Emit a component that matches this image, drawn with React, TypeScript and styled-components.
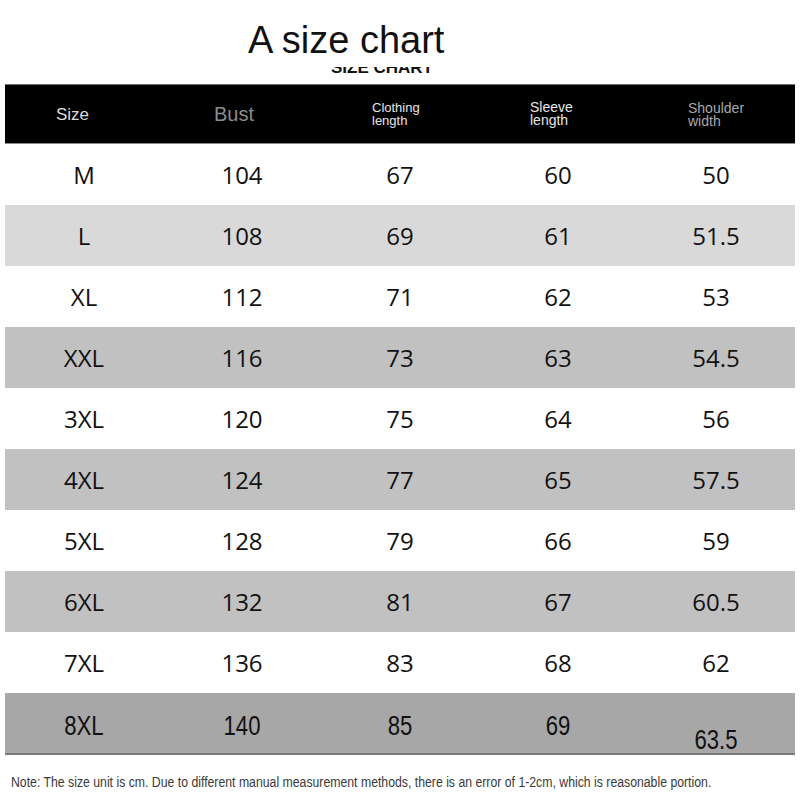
import * as React from 'react'
import styled, {createGlobalStyle} from 'styled-components'

const GlobalStyle = createGlobalStyle`
  html, body {
    margin: 0;
    padding: 0;
    background: #fff;
  }
`

type Row = {size: string, bust: string, length: string, sleeve: string, shoulder: string}

const rows: Row[] = [
  {size: 'M', bust: '104', length: '67', sleeve: '60', shoulder: '50'},
  {size: 'L', bust: '108', length: '69', sleeve: '61', shoulder: '51.5'},
  {size: 'XL', bust: '112', length: '71', sleeve: '62', shoulder: '53'},
  {size: 'XXL', bust: '116', length: '73', sleeve: '63', shoulder: '54.5'},
  {size: '3XL', bust: '120', length: '75', sleeve: '64', shoulder: '56'},
  {size: '4XL', bust: '124', length: '77', sleeve: '65', shoulder: '57.5'},
  {size: '5XL', bust: '128', length: '79', sleeve: '66', shoulder: '59'},
  {size: '6XL', bust: '132', length: '81', sleeve: '67', shoulder: '60.5'},
  {size: '7XL', bust: '136', length: '83', sleeve: '68', shoulder: '62'},
]

const shades = ['#ffffff', '#d9d9d9', '#ffffff', '#c1c1c1', '#ffffff', '#c1c1c1', '#ffffff', '#c1c1c1', '#ffffff']

const Page = styled.div`
  width: 800px;
  height: 800px;
  overflow: hidden;
  background: #fff;
  font-family: "Liberation Sans", Arial, sans-serif;
`

const TitleBlock = styled.div`
  height: 84px;
  display: flex;
  flex-direction: column;
`

const Title = styled.h1`
  margin: 22px 0 0 248px;
  font-size: 38px;
  line-height: 37px;
  font-weight: 400;
  color: #111;
`

// only the lower edge of this caption shows in the picture
const ClippedCaption = styled.div`
  margin: 8px 0 0 331px;
  width: 110px;
  height: 7px;
  overflow: hidden;
  font-size: 17px;
  font-weight: 700;
  line-height: 17px;
  color: #111;

  span {
    display: block;
    margin-top: -8px;
  }
`

const Table = styled.div`
  margin: 0 5px;
  width: 790px;
`

const Header = styled.div`
  height: 58px;
  background: #000;
  border-top: 1px solid #6e6e6e;
  border-bottom: 1px solid #8a8a8a;
  display: grid;
  grid-template-columns: repeat(5, 158px);
  align-items: center;
`

const HeadCell = styled.div<{$size: number, $color: string, $shift?: number}>`
  padding-left: 51px;
  font-size: ${p => p.$size}px;
  line-height: ${p => p.$size < 16 ? 13 : p.$size}px;
  color: ${p => p.$color};
  margin-top: ${p => p.$shift ?? 0}px;
`

const DataRow = styled.div<{$bg: string}>`
  height: 61px;
  background: ${p => p.$bg};
  display: grid;
  grid-template-columns: repeat(5, 158px);
  align-items: center;
`

const Cell = styled.div`
  text-align: center;
  font-family: "Open Sans", "Noto Sans", sans-serif;
  font-size: 24px;
  line-height: 30px;
  color: #111;
`

const LastRow = styled.div`
  height: 60px;
  background: #a7a7a7;
  border-bottom: 2px solid #7a7a7a;
  display: grid;
  grid-template-columns: repeat(5, 158px);
  align-items: center;
`

const NarrowCell = styled.div<{$drop?: number}>`
  text-align: center;
  font-family: "Liberation Sans", Arial, sans-serif;
  font-size: 27px;
  line-height: 30px;
  color: #111;
  transform: scaleX(0.82);
  margin-top: ${p => p.$drop ?? 4}px;
`

const Note = styled.p`
  margin: 19px 0 0 11px;
  font-family: "Liberation Sans", Arial, sans-serif;
  font-size: 14px;
  line-height: 16px;
  color: #3a3a3a;
  white-space: nowrap;
  transform: scaleX(0.876);
  transform-origin: left center;
`

export default function App() {
  return (
    <Page>
      <GlobalStyle />
      <TitleBlock>
        <Title>A size chart</Title>
        <ClippedCaption><span>SIZE CHART</span></ClippedCaption>
      </TitleBlock>
      <Table>
        <Header>
          <HeadCell $size={17} $color="#dcdcdc">Size</HeadCell>
          <HeadCell $size={20} $color="#8c8c8c">Bust</HeadCell>
          <HeadCell $size={13} $color="#e6e6e6" $shift={-1}>Clothing<br />length</HeadCell>
          <HeadCell $size={14} $color="#e6e6e6">Sleeve<br />length</HeadCell>
          <HeadCell $size={14} $color="#a8a8a8" $shift={2}>Shoulder<br />width</HeadCell>
        </Header>
        {rows.map((r, i) =>
          <DataRow key={r.size} $bg={shades[i]}>
            <Cell>{r.size}</Cell>
            <Cell>{r.bust}</Cell>
            <Cell>{r.length}</Cell>
            <Cell>{r.sleeve}</Cell>
            <Cell>{r.shoulder}</Cell>
          </DataRow>
        )}
        <LastRow>
          <NarrowCell>8XL</NarrowCell>
          <NarrowCell>140</NarrowCell>
          <NarrowCell>85</NarrowCell>
          <NarrowCell>69</NarrowCell>
          <NarrowCell $drop={32}>63.5</NarrowCell>
        </LastRow>
      </Table>
      <Note>
        Note: The size unit is cm. Due to different manual measurement methods, there is an error of 1-2cm, which is reasonable portion.
      </Note>
    </Page>
  )
}
